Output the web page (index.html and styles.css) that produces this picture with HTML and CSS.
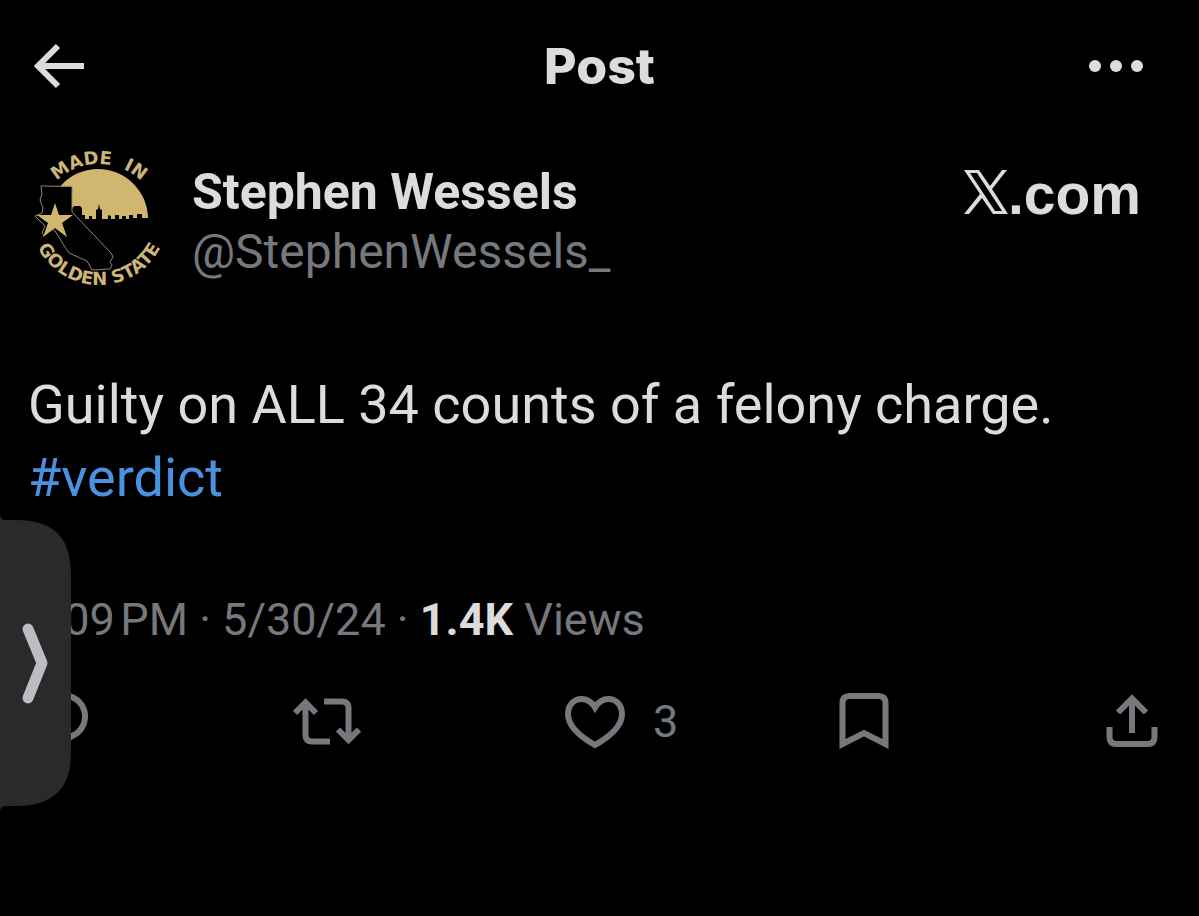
FILE: index.html
```html
<!DOCTYPE html>
<html lang="en">
<head>
  <meta charset="utf-8">
  <meta name="viewport" content="width=device-width, initial-scale=1">
  <title>Post</title>
  <link rel="stylesheet" href="styles.css">
</head>
<body>
  <header class="topbar">
    <button class="icon-button" aria-label="Back">
      <svg class="back-icon" width="50" height="46" viewBox="0 0 50 46"><path d="M24 3 4 23l20 20M5 23h45"/></svg>
    </button>
    <h1 class="title">Post</h1>
    <button class="icon-button more" aria-label="More">
      <svg width="54" height="14" viewBox="0 0 54 14"><circle cx="6" cy="7" r="6"/><circle cx="27" cy="7" r="6"/><circle cx="48" cy="7" r="6"/></svg>
    </button>
  </header>

  <main class="post">
    <div class="author">
      <svg class="avatar" width="140" height="144" viewBox="0 2 140 144" role="img" aria-label="Made in Golden State">
        <defs>
          <path id="arc-top" d="M8 77a61 61 0 0 1 122 0"/>
          <path id="arc-bottom" d="M0 68a69 69 0 0 0 138 0"/>
        </defs>
        <!-- sun and skyline -->
        <path class="gold" d="M18 71a50 50 0 0 1 100 0z"/>
        <path d="M40 73V60l4-1v-1h6l2 2v7h3v4h4v-3h3v3h4V62l2-1 1-5 1 5 2 1v9h6v-4l3 1v3h4v-4h4v4h3v-3h4v3h3v-4h4v3h4v-4h5v4h6v5H40z"/>
        <!-- California -->
        <path class="state" d="M11 38l31 .5V64l39 41 2 4-3 5 2 3-2 4-18 1-5-9-18-8-4-6-10-16-4-3-7 8-2-3 3-7-10-10 7-3 1-5-3-8 2-6z"/>
        <path class="gold" d="m25 55 4 12h14l-11 8 5 14-12-9-12 9 5-14-11-8h14z"/>
        <text class="seal-text"><textPath href="#arc-top" startOffset="50%" text-anchor="middle">MADE&#160; IN</textPath></text>
        <text class="seal-text"><textPath href="#arc-bottom" startOffset="50%" text-anchor="middle">GOLDEN STATE</textPath></text>
      </svg>
      <div class="names">
        <a class="name" href="#">Stephen Wessels</a>
        <a class="handle" href="#">@StephenWessels_</a>
      </div>
      <div class="brand">
        <svg width="44" height="44" viewBox="0 0 44 44" aria-hidden="true"><path fill-rule="evenodd" d="M0 0h15l11 16L38 0h5L28 19l16 25H29L18 28 5 44H0l16-20zM6 3l25 38h7L13 3z"/></svg>
        <span>.com</span>
      </div>
    </div>

    <p class="text">Guilty on ALL 34 counts of a felony charge. <a class="hashtag" href="#">#verdict</a></p>

    <p class="meta">2:09&#8239;PM · 5/30/24 · <strong>1.4K</strong> Views</p>

    <div class="actions">
      <button class="action" aria-label="Reply">
        <svg width="68" height="68" viewBox="0 0 68 68"><path d="M28 7.5h12a21 21 0 0 1 10 39.500L28 59V49.500a21 21 0 0 1 0-42z"/></svg>
      </button>
      <button class="action" aria-label="Repost">
        <svg width="68" height="68" viewBox="0 0 68 68"><path d="m2 25 10.500-10.500L23 25M12.500 15v32q0 6.500 6.500 6.500h18M31 13.500h18q6.500 0 6.500 6.500v32M45 41.500 55.500 52 66 41.500"/></svg>
      </button>
      <button class="action" aria-label="Like">
        <svg width="68" height="68" viewBox="0 0 68 68"><path d="M34 19.500C30 13 25 11 20.500 11 12 11 7 18 7 26c0 12 11 22 27 31 16-9 27-19 27-31 0-8-5-15-13.500-15C43 11 38 13 34 19.500z"/></svg>
        <span class="count">3</span>
      </button>
      <button class="action" aria-label="Bookmark">
        <svg width="68" height="68" viewBox="0 0 68 68"><path d="M12.500 56V15q0-7 7-7h29q7 0 7 7v41L34 45z"/></svg>
      </button>
      <button class="action" aria-label="Share">
        <svg width="68" height="68" viewBox="0 0 68 68"><path d="m20 24.500 14-14 14 14M34 11v34M11.500 39v10q0 7 7 7h31q7 0 7-7V39"/></svg>
      </button>
    </div>
  </main>

  <!-- handle of the minimised video window, tucked against the screen edge -->
  <button class="side-tab" aria-label="Show video">
    <svg width="72" height="300" viewBox="0 0 72 300">
      <path class="tab-shape" d="M0 0q0 6 6 6h10C54 6 71 24 71 60v178c0 36-17 54-55 54H6q-6 0-6 6z"/>
      <path class="tab-chevron" d="m28 115 14 34-14 35"/>
    </svg>
  </button>
</body>
</html>
```
FILE: styles.css
```css
* {
    box-sizing: border-box;
}

body {
    margin: 0;
    min-height: 100vh;
    background: #000;
    color: #dcdcdc;
    font-family: Roboto, "Liberation Sans", sans-serif;
}

a {
    color: inherit;
    text-decoration: none;
}

button {
    padding: 0;
    border: 0;
    background: none;
    color: inherit;
    font: inherit;
}

svg {
    display: block;
    flex: none;
}

.topbar {
    display: grid;
    grid-template-columns: 1fr auto 1fr;
    align-items: center;
    height: 132px;
    padding: 0 56px 0 34px;
}

.icon-button {
    justify-self: start;
}

.more {
    justify-self: end;
    fill: currentColor;
}

.back-icon {
    fill: none;
    stroke: currentColor;
    stroke-width: 6;
}

.title {
    margin: 0 0 0 22px;
    font: 800 50px/60px Inter, sans-serif;
}

.author {
    display: flex;
    align-items: center;
    padding: 18px 58px 0 30px;
}

.avatar {
    overflow: visible;
}

.gold {
    fill: #d0b66e;
}

.state {
    stroke: #8e8876;
    stroke-width: 1;
}

.seal-text {
    fill: #cdb577;
    font: bold 18px "DejaVu Sans", sans-serif;
}

.names {
    display: flex;
    flex-direction: column;
    flex: 1;
    margin-left: 22px;
    line-height: 60px;
}

.name {
    font-size: 50px;
    font-weight: bold;
}

.handle {
    color: #75787d;
    font-size: 48px;
}

.brand {
    display: flex;
    align-items: baseline;
    align-self: flex-start;
    padding-top: 4px;
    font: bold 57px/80px "Liberation Sans", sans-serif;
}

.brand svg {
    fill: currentColor;
}

.text {
    margin: 74px 28px 0;
    font-size: 54px;
    line-height: 73px;
}

.hashtag {
    display: block;
    width: fit-content;
    color: #4a92e0;
}

.meta {
    margin: 76px 28px 0;
    color: #75787d;
    font-size: 45px;
    line-height: 60px;
}

.meta strong {
    color: #dcdcdc;
}

.actions {
    display: flex;
    justify-content: space-between;
    margin-top: 38px;
    padding: 0 33px 0 24px;
    color: #75787d;
}

.action {
    display: flex;
    align-items: center;
    width: 68px;
}

.action svg {
    fill: none;
    stroke: currentColor;
    stroke-width: 6;
}

.count {
    margin-left: 24px;
    font-size: 45px;
    line-height: 60px;
}

.side-tab {
    position: absolute;
    top: 514px;
    left: 0;
}

.tab-shape {
    fill: #2a2a2b;
}

.tab-chevron {
    fill: none;
    stroke: #bdbcc2;
    stroke-width: 11;
    stroke-linecap: round;
    stroke-linejoin: round;
}
```
